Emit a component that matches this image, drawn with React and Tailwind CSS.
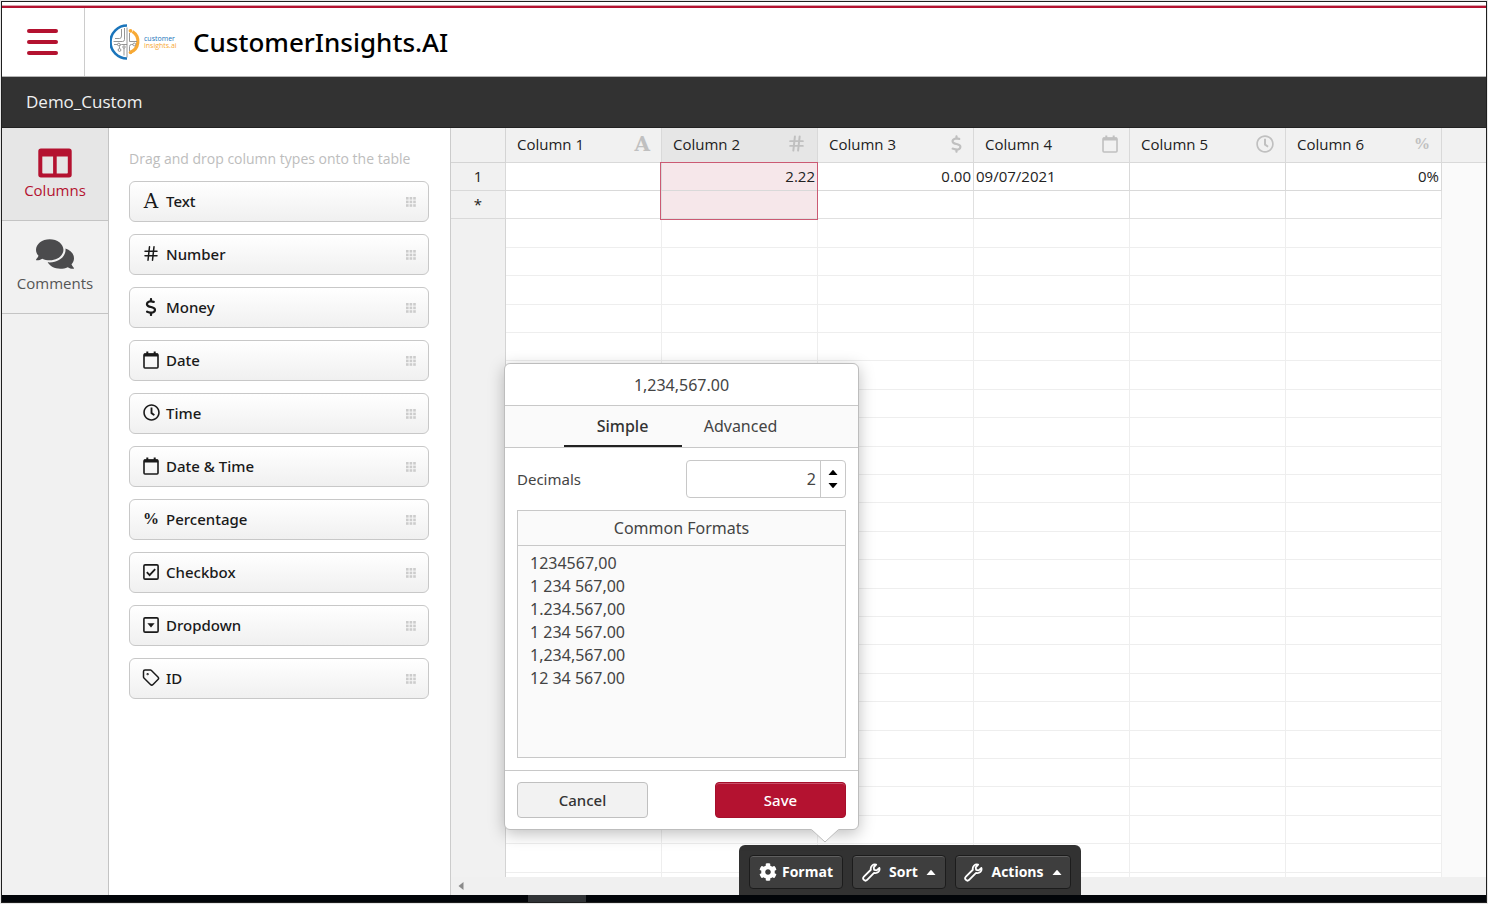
import { useState } from 'react';
import { Hash, Tag } from 'lucide-react';
import { FaCog, FaComments, FaRegClock } from 'react-icons/fa';
import { FaDollarSign } from 'react-icons/fa6';

function LetterIcon({ className }) {
  return (
    <span aria-hidden="true" className={`font-['DejaVu_Serif',serif] text-[20px] leading-none ${className}`}>
      A
    </span>
  );
}

function PercentIcon() {
  return (
    <span aria-hidden="true" className="font-['Liberation_Serif',serif] text-base leading-none font-bold">
      %
    </span>
  );
}

function CalendarIcon() {
  return (
    <svg aria-hidden="true" viewBox="0 0 16 18" className="h-[18px] w-4 shrink-0" fill="none">
      <rect x="1" y="3" width="14" height="14" rx="1" stroke="currentColor" strokeWidth="1.6" />
      <path d="M1 2.5h14v3H1zM3.3 0.5h2v3h-2zM10.7 0.5h2v3h-2z" fill="currentColor" />
    </svg>
  );
}

function CheckIcon() {
  return (
    <svg aria-hidden="true" viewBox="0 0 16 16" className="size-4 shrink-0" fill="none" stroke="currentColor">
      <rect x="0.9" y="0.9" width="14.2" height="14.2" rx="1.2" strokeWidth="1.6" />
      <path d="M3.8 8.2l2.8 2.9 5.600-6" strokeWidth="1.8" />
    </svg>
  );
}

function DropdownIcon() {
  return (
    <svg aria-hidden="true" viewBox="0 0 16 16" className="size-4 shrink-0" fill="none">
      <rect x="0.9" y="0.9" width="14.2" height="14.2" rx="1.2" stroke="currentColor" strokeWidth="1.6" />
      <path d="M4.4 6.2h7.2L8 10.4z" fill="currentColor" />
    </svg>
  );
}

function WrenchIcon() {
  return (
    <svg
      aria-hidden="true"
      viewBox="0 0 20 20"
      className="size-[19px] shrink-0"
      fill="none"
      stroke="currentColor"
      strokeWidth="1.9"
      strokeLinejoin="round"
    >
      <path d="M18.300 5.200l-2.900 2.500-2.600-.5-.5-2.600 2.600-2.900C11.600.8 8.600 3.400 9.300 7.100L2 14.400a2.300 2.300 0 0 0 3.400 3.400l7.300-7.300c3.800.8 6.500-2 5.600-5.300z" />
    </svg>
  );
}

function ColumnsIcon() {
  return (
    <svg aria-hidden="true" viewBox="0 0 34 30" className="h-[30px] w-[34px]">
      <path
        fill="currentColor"
        fillRule="evenodd"
        d="M3 0.5h28a2.7 2.7 0 0 1 2.7 2.7v23.6a2.7 2.7 0 0 1-2.7 2.7H3A2.7 2.7 0 0 1 .3 26.800V3.200A2.700 2.700 0 0 1 3 .5zM4.300 8.500v16.200a.8.8 0 0 0 .8.8h10V8.500zM18.700 8.500v17h10.300a.8.8 0 0 0 .8-.8V8.500z"
      />
    </svg>
  );
}

function GripIcon() {
  return (
    <svg aria-hidden="true" viewBox="0 0 10 10" className="size-[10px] fill-[#cccccc]">
      {[0, 3.6, 7.2].map((y) =>
        [0, 3.6, 7.2].map((x) => <rect key={`${x}-${y}`} x={x} y={y} width="2.6" height="2.6" />),
      )}
    </svg>
  );
}

function Caret({ down = false }) {
  return (
    <svg aria-hidden="true" viewBox="0 0 10 5" className="h-[5px] w-[10px] shrink-0 fill-current">
      <path d={down ? 'M0.500 0h9L5.500 4.700q-.5.5-1 0z' : 'M0.500 5h9L5.500 0.300q-.5-.5-1 0z'} />
    </svg>
  );
}

function LogoMark() {
  return (
    <svg aria-hidden="true" viewBox="0 0 32 36" className="h-9 w-8 shrink-0" fill="none">
      <path d="M17 1.500A16.300 16.300 0 0 0 17 34.500" stroke="#1b75bb" strokeWidth="2.600" />
      <path d="M22.500 7.500A11.800 11.800 0 0 1 20 28.500" stroke="#f7a935" strokeWidth="3.200" />
      <circle cx="20.500" cy="6.800" r="1.900" fill="#f7a935" />
      <circle cx="20.500" cy="28.500" r="1.800" fill="#f7a935" />
      <g stroke="#8a8a8a" strokeWidth="0.900">
        <path d="M17 3.500v30M14.500 4v11.500q0 2-2 2H3.500M11.500 5v7q0 2.500-2 2.500H5M19.500 9v8.500h7.500M17 20.500h-5.500q-2 0-2 2v2M4 20.500h3.500M19.500 27v-4.500q0-2 2-2h1.500M14 24v7.500" />
        <circle cx="9.500" cy="26" r="1.400" />
        <circle cx="8.800" cy="20.500" r="1.300" />
        <circle cx="24.300" cy="20.500" r="1.400" />
        <circle cx="14" cy="23" r="1.200" />
      </g>
    </svg>
  );
}

const columnTypes = [
  { label: 'Text', icon: <LetterIcon className="font-normal" /> },
  { label: 'Number', icon: <Hash size={19} strokeWidth={2} /> },
  { label: 'Money', icon: <FaDollarSign size={18} /> },
  { label: 'Date', icon: <CalendarIcon /> },
  { label: 'Time', icon: <FaRegClock size={17} /> },
  { label: 'Date & Time', icon: <CalendarIcon /> },
  { label: 'Percentage', icon: <PercentIcon /> },
  { label: 'Checkbox', icon: <CheckIcon /> },
  { label: 'Dropdown', icon: <DropdownIcon /> },
  { label: 'ID', icon: <Tag size={19} strokeWidth={2} /> },
];

const tableColumns = [
  { label: 'Column 1', icon: <LetterIcon className="font-bold" />, value: '' },
  { label: 'Column 2', icon: <Hash size={19} strokeWidth={2.5} />, value: '2.22', align: 'text-right', selected: true },
  { label: 'Column 3', icon: <FaDollarSign className="h-[18px] w-[11px]" />, value: '0.00', align: 'text-right' },
  { label: 'Column 4', icon: <CalendarIcon />, value: '09/07/2021' },
  { label: 'Column 5', icon: <FaRegClock size={18} />, value: '' },
  { label: 'Column 6', icon: <PercentIcon />, value: '0%', align: 'text-right' },
];

const emptyRows = Array.from({ length: 24 }, (_, i) => i);

const formats = ['1234567,00', '1 234 567,00', '1.234.567,00', '1 234 567.00', '1,234,567.00', '12 34 567.00'];

function Header() {
  return (
    <header className="flex h-[75px] shrink-0 flex-col border-b border-[#b5b5b5] bg-white pt-[3px]">
      <div className="h-[3px] shrink-0 border-t border-[#d9a5ae] bg-[#b41230]" />
      <div className="flex flex-1 items-center">
        <button type="button" aria-label="Menu" className="flex h-full w-[83px] items-center border-r border-[#cccccc] pl-[25px]">
          <span className="flex flex-col gap-[7px]">
            <span className="h-1 w-[31px] rounded-xs bg-[#b41230]" />
            <span className="h-1 w-[31px] rounded-xs bg-[#b41230]" />
            <span className="h-1 w-[31px] rounded-xs bg-[#b41230]" />
          </span>
        </button>
        <div className="flex items-center pl-[25px]">
          <LogoMark />
          <div className="w-[51px] pl-[2px] text-[7px] leading-[7px]">
            <div className="text-[#1b75bb]">customer</div>
            <div className="text-[#f7a935]">insights.ai</div>
          </div>
          <h1 className="font-['Noto_Sans',sans-serif] text-[26px] leading-8 font-medium text-black">CustomerInsights.AI</h1>
        </div>
      </div>
    </header>
  );
}

function SideNav() {
  return (
    <nav className="w-[107px] shrink-0 border-r border-[#c4c4c4] bg-[#f1f1f1] text-[15px] leading-6">
      <button type="button" className="flex h-[93px] w-full flex-col items-center border-b border-[#c4c4c4] bg-[#e6e6e6] pt-5 text-[#b41230]">
        <ColumnsIcon />
        <span>Columns</span>
      </button>
      <button type="button" className="flex h-[93px] w-full flex-col items-center border-b border-[#c4c4c4] pt-4 text-[#555555]">
        <FaComments className="h-[34px] w-[38px] text-[#4b4b4d]" />
        <span>Comments</span>
      </button>
    </nav>
  );
}

function TypePanel() {
  return (
    <aside className="w-[342px] shrink-0 border-r border-[#cccccc] bg-white pt-[19px] pr-[21px] pl-5">
      <p className="text-sm leading-6 whitespace-nowrap text-[#bdbdbd]">Drag and drop column types onto the table</p>
      <ul className="flex flex-col gap-3 pt-[10px]">
        {columnTypes.map(({ label, icon }) => (
          <li key={label}>
            <button
              type="button"
              className="flex h-[41px] w-full items-center justify-between rounded-md border border-[#c8c8c8] bg-linear-to-b from-white to-[#f0f0f0] pr-3 pl-3 text-[#1a1a1a]"
            >
              <span className="flex items-center gap-[6px] pb-[2px]">
                <span className="flex w-[18px] justify-center">{icon}</span>
                <span className="font-['Noto_Sans',sans-serif] text-[15px] leading-6 font-medium">{label}</span>
              </span>
              <GripIcon />
            </button>
          </li>
        ))}
      </ul>
    </aside>
  );
}

function Sheet() {
  return (
    <div className="min-h-0 flex-1 overflow-hidden bg-[#fafafa]">
      <table className="w-full table-fixed border-separate border-spacing-0 text-[#222222]">
        <thead>
          <tr className="h-[35px]">
            <th aria-label="Row" className="w-[55px] border-r border-b border-[#d4d4d4] bg-[#f1f1f1] p-0" />
            {tableColumns.map(({ label, icon, selected }) => (
              <th
                key={label}
                scope="col"
                className={`w-[156px] border-r border-b border-[#d9d9d9] p-0 font-normal ${selected ? 'bg-[#e6e6e6]' : 'bg-[#f1f1f1]'}`}
              >
                <div className="flex items-center justify-between pr-[11px] pb-[3px] pl-[11px] text-[15px] leading-6">
                  {label}
                  <span className="flex h-6 items-center text-[#c0c0c0]">{icon}</span>
                </div>
              </th>
            ))}
            <th aria-label="Unused" className="border-b border-[#d9d9d9] bg-[#f1f1f1] p-0" />
          </tr>
        </thead>
        <tbody>
          <tr className="h-7">
            <th scope="row" className="border-r border-b border-[#d9d9d9] bg-[#f1f1f1] px-0 pt-0 pb-[2px] text-[15px] leading-6 font-normal">1</th>
            {tableColumns.map(({ label, value, align = 'text-left', selected }) => (
              <td
                key={label}
                className={`relative border-r border-b border-[#d9d9d9] px-[2px] pt-0 pb-[2px] text-[15px] leading-6 ${align} ${selected ? 'bg-[#f6e7ea]' : 'bg-white'}`}
              >
                {value}
                {selected && <span className="pointer-events-none absolute -top-px -left-[2px] z-10 h-[58px] w-[158px] border border-[#cb5a73]" />}
              </td>
            ))}
            <td className="p-0" />
          </tr>
          <tr className="h-7">
            <th scope="row" className="border-r border-b border-[#d9d9d9] bg-[#f1f1f1] px-0 pt-0 pb-[2px] text-[15px] leading-6 font-normal">*</th>
            {tableColumns.map(({ label, selected }) => (
              <td key={label} className={`border-r border-b border-[#e0e0e0] p-0 ${selected ? 'bg-[#f6e7ea]' : 'bg-white'}`} />
            ))}
            <td className="p-0" />
          </tr>
        </tbody>
        <tbody>
          {emptyRows.map((row) => (
            <tr key={row} className="h-7 nth-[5n+1]:h-[29px] nth-[5n+3]:h-[29px]">
              <td className="border-r border-[#d4d4d4] bg-[#f1f1f1] p-0" />
              {tableColumns.map(({ label }) => (
                <td key={label} className="border-r border-b border-[#eeeeee] bg-white p-0" />
              ))}
              <td className="p-0" />
            </tr>
          ))}
        </tbody>
      </table>
    </div>
  );
}

function FormatPopover() {
  const [tab, setTab] = useState('Simple');
  const [decimals, setDecimals] = useState(2);
  return (
    <div
      role="dialog"
      aria-label="Number format"
      className="absolute bottom-[65px] left-[-235px] z-20 w-[355px] rounded-md border border-[#bdbdbd] bg-white font-['Noto_Sans',sans-serif] text-base text-[#444444] shadow-[0_4px_16px_rgba(0,0,0,0.25)]"
    >
      <div className="flex h-[42px] items-center justify-center border-b border-[#c8c8c8]">1,234,567.00</div>
      <div role="tablist" className="flex h-[42px] justify-center border-b border-[#c8c8c8] bg-[#fafafa]">
        {['Simple', 'Advanced'].map((name) => (
          <button
            key={name}
            type="button"
            role="tab"
            aria-selected={tab === name}
            onClick={() => setTab(name)}
            className={`h-[41px] w-[118px] border-b-2 ${tab === name ? 'border-[#222222] font-medium text-[#333333]' : 'border-transparent'}`}
          >
            {name}
          </button>
        ))}
      </div>
      <div className="p-3">
        <div className="flex items-center justify-between">
          <label htmlFor="decimals" className="text-[15px]">Decimals</label>
          <div className="flex h-[38px] w-40 rounded-sm border border-[#c8c8c8]">
            <input
              id="decimals"
              type="text"
              inputMode="numeric"
              value={decimals}
              onChange={(event) => setDecimals(Number(event.target.value) || 0)}
              className="min-w-0 flex-1 px-1 text-right outline-none"
            />
            <div className="flex w-[25px] flex-col items-center justify-center border-l border-[#c8c8c8] text-black">
              <button type="button" aria-label="Increase decimals" onClick={() => setDecimals(decimals + 1)} className="flex h-[13px] items-center">
                <Caret />
              </button>
              <button type="button" aria-label="Decrease decimals" onClick={() => setDecimals(Math.max(0, decimals - 1))} className="flex h-[13px] items-center">
                <Caret down />
              </button>
            </div>
          </div>
        </div>
        <div className="mt-3 h-[248px] border border-[#c8c8c8] bg-[#fafafa]">
          <h2 className="flex h-[35px] items-center justify-center border-b border-[#c8c8c8]">Common Formats</h2>
          <ul className="px-3 pt-[6px]">
            {formats.map((format) => (
              <li key={format} className="leading-[23px]">{format}</li>
            ))}
          </ul>
        </div>
      </div>
      <div className="flex justify-between border-t border-[#c8c8c8] px-3 py-[11px] text-[15px] font-medium">
        <button type="button" className="h-9 w-[131px] rounded-sm border border-[#c0c0c0] bg-[#f2f2f2] text-[#333333]">Cancel</button>
        <button type="button" className="h-9 w-[131px] rounded-sm border border-[#a50f2b] bg-[#b41230] text-white shadow-[inset_0_1px_0_#c8506a]">Save</button>
      </div>
      <svg aria-hidden="true" viewBox="0 0 28 14" className="absolute top-full left-[306px] h-[14px] w-7">
        <path d="M0 0L14 13L28 0Z" fill="#ffffff" />
        <path d="M0.500 0.500L14 13L27.500 0.500" fill="none" stroke="#bdbdbd" />
      </svg>
    </div>
  );
}

function Toolbar() {
  const button =
    'flex h-[34px] items-center rounded-sm border border-[#1c1c1c] bg-[#3e3e3e] text-sm font-bold text-white shadow-[inset_0_1px_0_#606060]';
  return (
    <div className="absolute bottom-0 left-[288px] z-20 flex h-[50px] gap-[9px] rounded-t-md bg-[#323232] px-[10px] pt-[10px]">
      <button type="button" className={`${button} w-[94px] justify-center gap-[5px]`}>
        <FaCog size={18} /> Format
      </button>
      <button type="button" className={`${button} w-[94px] justify-center gap-2`}>
        <WrenchIcon /> Sort <Caret />
      </button>
      <button type="button" className={`${button} w-[116px] justify-center gap-2`}>
        <WrenchIcon /> Actions <Caret />
      </button>
      <FormatPopover />
    </div>
  );
}

export default function App() {
  return (
    <div className="h-screen bg-[#e8e8e8] p-px font-['Open_Sans','Noto_Sans',sans-serif]">
      <div className="flex h-full flex-col overflow-hidden border border-[#1f1f1f] bg-white">
        <Header />
        <div className="flex h-[51px] shrink-0 items-center border-b border-[#222222] bg-[#323232] pl-6 text-[17px] text-[#f0f0f0]">
          Demo_Custom
        </div>
        <main className="flex min-h-0 flex-1">
          <SideNav />
          <TypePanel />
          <section className="relative flex min-w-0 flex-1 flex-col">
            <Sheet />
            <div className="flex h-[18px] shrink-0 items-center bg-[#f0f0f0] pl-[7px]">
              <svg aria-hidden="true" viewBox="0 0 6 8" className="h-2 w-[6px] fill-[#8a8a8a]">
                <path d="M5.500 0v8L0.500 4z" />
              </svg>
            </div>
            <Toolbar />
          </section>
        </main>
        <div className="h-[7px] shrink-0 bg-[#020509] pl-[526px]">
          <div className="h-full w-[58px] bg-[#303336]" />
        </div>
      </div>
    </div>
  );
}
